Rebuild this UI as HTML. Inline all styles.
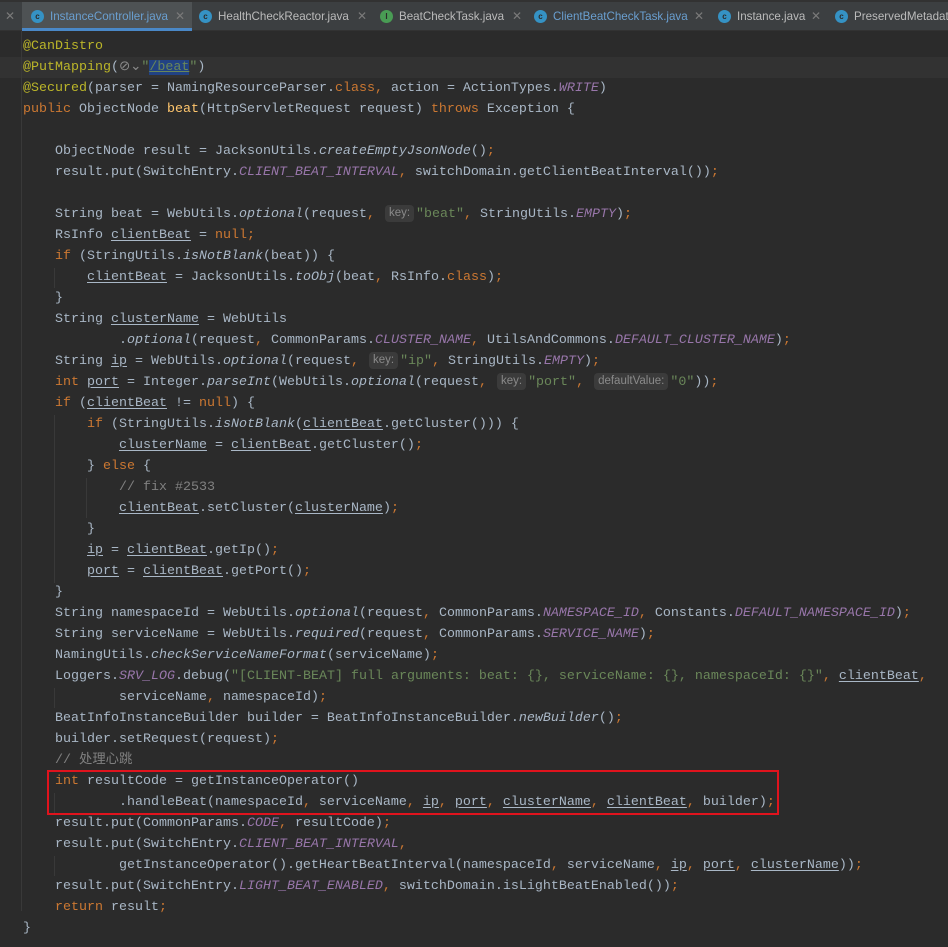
<!DOCTYPE html>
<html><head><meta charset="utf-8"><style>
html,body{margin:0;padding:0;}
body{width:948px;height:947px;overflow:hidden;background:#2b2b2b;position:relative;font-family:"Liberation Mono",monospace;}
#tabs{position:absolute;left:0;top:0;width:948px;height:31px;background:#3c3f41;border-top:2px solid #323232;box-sizing:border-box;border-bottom:1px solid #323232;font-family:"Liberation Sans",sans-serif;font-size:11.6px;color:#bbbbbb;}
.tab{position:absolute;top:0;height:29px;line-height:29px;white-space:nowrap;}
.ic{position:absolute;top:8px;width:13px;height:13px;border-radius:50%;background:#3592c4;color:#2b2b2b;font-size:8px;line-height:13px;text-align:center;font-weight:bold;}
.ic.g{background:#499c54;}
.x{position:absolute;top:0;line-height:29px;color:#7a7a7a;font-size:12px;}
#code{position:absolute;left:0;top:36px;width:948px;}
.l{position:absolute;left:23px;height:21px;line-height:21px;font-size:13.33px;color:#a9b7c6;white-space:pre;}
.k{color:#cc7832}.a{color:#bbb529}.s{color:#6a8759}.c{color:#9876aa;font-style:italic}.i{font-style:italic}
.u{text-decoration:underline;text-underline-offset:2px}.m{color:#808080}.f{color:#ffc66d}
.h{display:inline-block;background:#3b3b3b;color:#8a8a8a;border-radius:4px;font-family:"Liberation Sans",sans-serif;font-size:11.5px;height:17px;line-height:17px;padding:0 4px;vertical-align:1px;margin:0 2px 0 2px;}
.guide{position:absolute;width:1px;background:#393939;}
</style></head><body>
<div id="tabs">
 <div class="x" style="left:5px">✕</div>
 <div class="tab" style="left:22px;width:170px;background:#4e5254;border-bottom:3px solid #4a88c7;height:26px;"></div>
 <div class="tab" style="left:31px;"><span class="ic" style="left:0">c</span><span style="position:absolute;left:19px;color:#6a9fd0">InstanceController.java</span></div>
 <div class="x" style="left:175px">✕</div>
 <div class="tab" style="left:199px;"><span class="ic" style="left:0">c</span><span style="position:absolute;left:19px">HealthCheckReactor.java</span></div>
 <div class="x" style="left:357px">✕</div>
 <div class="tab" style="left:380px;"><span class="ic g" style="left:0">I</span><span style="position:absolute;left:19px">BeatCheckTask.java</span></div>
 <div class="x" style="left:512px">✕</div>
 <div class="tab" style="left:534px;"><span class="ic" style="left:0">c</span><span style="position:absolute;left:19px;color:#6a9fd0">ClientBeatCheckTask.java</span></div>
 <div class="x" style="left:694px">✕</div>
 <div class="tab" style="left:718px;"><span class="ic" style="left:0">c</span><span style="position:absolute;left:19px">Instance.java</span></div>
 <div class="x" style="left:811px">✕</div>
 <div class="tab" style="left:835px;"><span class="ic" style="left:0">c</span><span style="position:absolute;left:19px">PreservedMetadata</span></div>
</div>
<div style="position:absolute;left:0;top:57px;width:948px;height:21px;background:#323232"></div>
<div class="guide" style="left:21px;top:31px;height:880px"></div>
<div class="guide" style="left:54px;top:268px;height:20px"></div>
<div class="guide" style="left:54px;top:415px;height:168px"></div>
<div class="guide" style="left:86px;top:478px;height:40px"></div>
<div class="guide" style="left:54px;top:688px;height:20px"></div>
<div class="guide" style="left:54px;top:793px;height:20px"></div>
<div class="guide" style="left:54px;top:856px;height:20px"></div>
<div id="code">
<div class="l" style="top:0"><span class="a">@CanDistro</span></div>
<div class="l" style="top:21px"><span class="a">@PutMapping</span>(<span style="color:#8a8a8a">⊘⌄</span><span class="s">"<span style="background:#214283;text-decoration:underline">/beat</span>"</span>)</div>
<div class="l" style="top:42px"><span class="a">@Secured</span>(parser = NamingResourceParser.<span class="k">class</span><span class="k">,</span> action = ActionTypes.<span class="c">WRITE</span>)</div>
<div class="l" style="top:63px"><span class="k">public</span> ObjectNode <span class="f">beat</span>(HttpServletRequest request) <span class="k">throws</span> Exception {</div>
<div class="l" style="top:105px">    ObjectNode result = JacksonUtils.<span class="i">createEmptyJsonNode</span>()<span class="k">;</span></div>
<div class="l" style="top:126px">    result.put(SwitchEntry.<span class="c">CLIENT_BEAT_INTERVAL</span><span class="k">,</span> switchDomain.getClientBeatInterval())<span class="k">;</span></div>
<div class="l" style="top:168px">    String beat = WebUtils.<span class="i">optional</span>(request<span class="k">,</span> <span class="h">key:</span><span class="s">"beat"</span><span class="k">,</span> StringUtils.<span class="c">EMPTY</span>)<span class="k">;</span></div>
<div class="l" style="top:189px">    RsInfo <span class="u">clientBeat</span> = <span class="k">null;</span></div>
<div class="l" style="top:210px">    <span class="k">if</span> (StringUtils.<span class="i">isNotBlank</span>(beat)) {</div>
<div class="l" style="top:231px">        <span class="u">clientBeat</span> = JacksonUtils.<span class="i">toObj</span>(beat<span class="k">,</span> RsInfo.<span class="k">class</span>)<span class="k">;</span></div>
<div class="l" style="top:252px">    }</div>
<div class="l" style="top:273px">    String <span class="u">clusterName</span> = WebUtils</div>
<div class="l" style="top:294px">            .<span class="i">optional</span>(request<span class="k">,</span> CommonParams.<span class="c">CLUSTER_NAME</span><span class="k">,</span> UtilsAndCommons.<span class="c">DEFAULT_CLUSTER_NAME</span>)<span class="k">;</span></div>
<div class="l" style="top:315px">    String <span class="u">ip</span> = WebUtils.<span class="i">optional</span>(request<span class="k">,</span> <span class="h">key:</span><span class="s">"ip"</span><span class="k">,</span> StringUtils.<span class="c">EMPTY</span>)<span class="k">;</span></div>
<div class="l" style="top:336px">    <span class="k">int</span> <span class="u">port</span> = Integer.<span class="i">parseInt</span>(WebUtils.<span class="i">optional</span>(request<span class="k">,</span> <span class="h">key:</span><span class="s">"port"</span><span class="k">,</span> <span class="h">defaultValue:</span><span class="s">"0"</span>))<span class="k">;</span></div>
<div class="l" style="top:357px">    <span class="k">if</span> (<span class="u">clientBeat</span> != <span class="k">null</span>) {</div>
<div class="l" style="top:378px">        <span class="k">if</span> (StringUtils.<span class="i">isNotBlank</span>(<span class="u">clientBeat</span>.getCluster())) {</div>
<div class="l" style="top:399px">            <span class="u">clusterName</span> = <span class="u">clientBeat</span>.getCluster()<span class="k">;</span></div>
<div class="l" style="top:420px">        } <span class="k">else</span> {</div>
<div class="l" style="top:441px">            <span class="m">// fix #2533</span></div>
<div class="l" style="top:462px">            <span class="u">clientBeat</span>.setCluster(<span class="u">clusterName</span>)<span class="k">;</span></div>
<div class="l" style="top:483px">        }</div>
<div class="l" style="top:504px">        <span class="u">ip</span> = <span class="u">clientBeat</span>.getIp()<span class="k">;</span></div>
<div class="l" style="top:525px">        <span class="u">port</span> = <span class="u">clientBeat</span>.getPort()<span class="k">;</span></div>
<div class="l" style="top:546px">    }</div>
<div class="l" style="top:567px">    String namespaceId = WebUtils.<span class="i">optional</span>(request<span class="k">,</span> CommonParams.<span class="c">NAMESPACE_ID</span><span class="k">,</span> Constants.<span class="c">DEFAULT_NAMESPACE_ID</span>)<span class="k">;</span></div>
<div class="l" style="top:588px">    String serviceName = WebUtils.<span class="i">required</span>(request<span class="k">,</span> CommonParams.<span class="c">SERVICE_NAME</span>)<span class="k">;</span></div>
<div class="l" style="top:609px">    NamingUtils.<span class="i">checkServiceNameFormat</span>(serviceName)<span class="k">;</span></div>
<div class="l" style="top:630px">    Loggers.<span class="c">SRV_LOG</span>.debug(<span class="s">"[CLIENT-BEAT] full arguments: beat: {}, serviceName: {}, namespaceId: {}"</span><span class="k">,</span> <span class="u">clientBeat</span><span class="k">,</span></div>
<div class="l" style="top:651px">            serviceName<span class="k">,</span> namespaceId)<span class="k">;</span></div>
<div class="l" style="top:672px">    BeatInfoInstanceBuilder builder = BeatInfoInstanceBuilder.<span class="i">newBuilder</span>()<span class="k">;</span></div>
<div class="l" style="top:693px">    builder.setRequest(request)<span class="k">;</span></div>
<div class="l" style="top:714px">    <span class="m" style="font-family:'Liberation Mono','Noto Sans CJK SC',monospace">// 处理心跳</span></div>
<div class="l" style="top:735px">    <span class="k">int</span> resultCode = getInstanceOperator()</div>
<div class="l" style="top:756px">            .handleBeat(namespaceId<span class="k">,</span> serviceName<span class="k">,</span> <span class="u">ip</span><span class="k">,</span> <span class="u">port</span><span class="k">,</span> <span class="u">clusterName</span><span class="k">,</span> <span class="u">clientBeat</span><span class="k">,</span> builder)<span class="k">;</span></div>
<div class="l" style="top:777px">    result.put(CommonParams.<span class="c">CODE</span><span class="k">,</span> resultCode)<span class="k">;</span></div>
<div class="l" style="top:798px">    result.put(SwitchEntry.<span class="c">CLIENT_BEAT_INTERVAL</span><span class="k">,</span></div>
<div class="l" style="top:819px">            getInstanceOperator().getHeartBeatInterval(namespaceId<span class="k">,</span> serviceName<span class="k">,</span> <span class="u">ip</span><span class="k">,</span> <span class="u">port</span><span class="k">,</span> <span class="u">clusterName</span>))<span class="k">;</span></div>
<div class="l" style="top:840px">    result.put(SwitchEntry.<span class="c">LIGHT_BEAT_ENABLED</span><span class="k">,</span> switchDomain.isLightBeatEnabled())<span class="k">;</span></div>
<div class="l" style="top:861px">    <span class="k">return</span> result<span class="k">;</span></div>
<div class="l" style="top:882px">}</div>
</div>
<div style="position:absolute;left:47px;top:770px;width:728px;height:41px;border:2px solid #e0131d;"></div>
</body></html>
